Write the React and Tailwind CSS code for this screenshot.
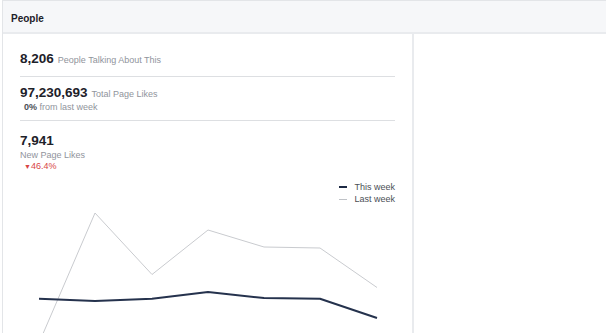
import React from 'react';

const font = { fontFamily: '"Liberation Sans", Arial, sans-serif' };

const thisWeek = [
  [36, 93.7], [92, 96], [149, 93.7], [205, 87], [261, 93], [317, 93.7], [374, 113],
];
const lastWeek = [
  [36, 138], [92, 8], [149, 69.5], [205, 25], [261, 42], [317, 43], [374, 82.5],
];

const toPoints = (pts) => pts.map((p) => p.join(',')).join(' ');

function Stat({ value, label }) {
  return (
    <div className="flex items-baseline gap-[4px]">
      <span className="text-[13.5px] leading-[16px] font-bold text-[#1d2129]">{value}</span>
      <span className="text-[9px] text-[#90949c]">{label}</span>
    </div>
  );
}

function App() {
  return (
    <div className="min-h-screen w-full bg-white pl-[2px] overflow-hidden" style={font}>
      <div className="border-l border-t border-[#e3e5e8]">
        {/* header */}
        <div className="h-[33px] bg-[#f6f7f9] border-b-2 border-[#e9ebee] pl-[8px] pt-[12px]">
          <div className="text-[10px] leading-[12px] font-bold text-[#1d2129]">People</div>
        </div>

        <div className="flex">
          <div className="w-[411px] border-r-2 border-[#e9ebee] bg-white">
            <div className="pl-[17px] pr-[17px]">
              <div className="pt-[17px] pb-[8px] border-b border-[#dddfe2]">
                <Stat value="8,206" label="People Talking About This" />
              </div>
              <div className="pt-[8px] pb-[7px] border-b border-[#dddfe2]">
                <Stat value="97,230,693" label="Total Page Likes" />
                <div className="mt-[1px] pl-[4px] text-[9px] leading-[11px] text-[#90949c]">
                  <span className="font-bold text-[#4b4f56]">0%</span> from last week
                </div>
              </div>
              <div className="pt-[12px]">
                <div className="text-[13.5px] leading-[16px] font-bold text-[#1d2129]">7,941</div>
                <div className="mt-[1px] text-[9px] leading-[11px] text-[#90949c]">New Page Likes</div>
                <div className="pl-[4px] text-[9px] leading-[11px] text-[#d84545]">
                  <span className="text-[7px]">▼</span>46.4%
                </div>
              </div>
              <div className="flex flex-col items-end mt-[9px] text-[9px] leading-[12px] text-[#4b4f56]">
                <div className="flex items-center gap-[7px]">
                  <span className="w-[8px] h-[2px] bg-[#1d2a44]" />
                  <span>This week</span>
                </div>
                <div className="flex items-center gap-[7px]">
                  <span className="w-[8px] h-px bg-[#bfc2c7]" />
                  <span>Last week</span>
                </div>
              </div>
            </div>
            <svg className="block" width="409" height="140" viewBox="0 0 409 140">
              <polyline points={toPoints(lastWeek)} fill="none" stroke="#c9cbcf" strokeWidth="1" />
              <polyline points={toPoints(thisWeek)} fill="none" stroke="#25324d" strokeWidth="2" strokeLinejoin="round" />
            </svg>
          </div>
          <div className="flex-1 bg-white" />
        </div>
      </div>
    </div>
  );
}

export default App;
